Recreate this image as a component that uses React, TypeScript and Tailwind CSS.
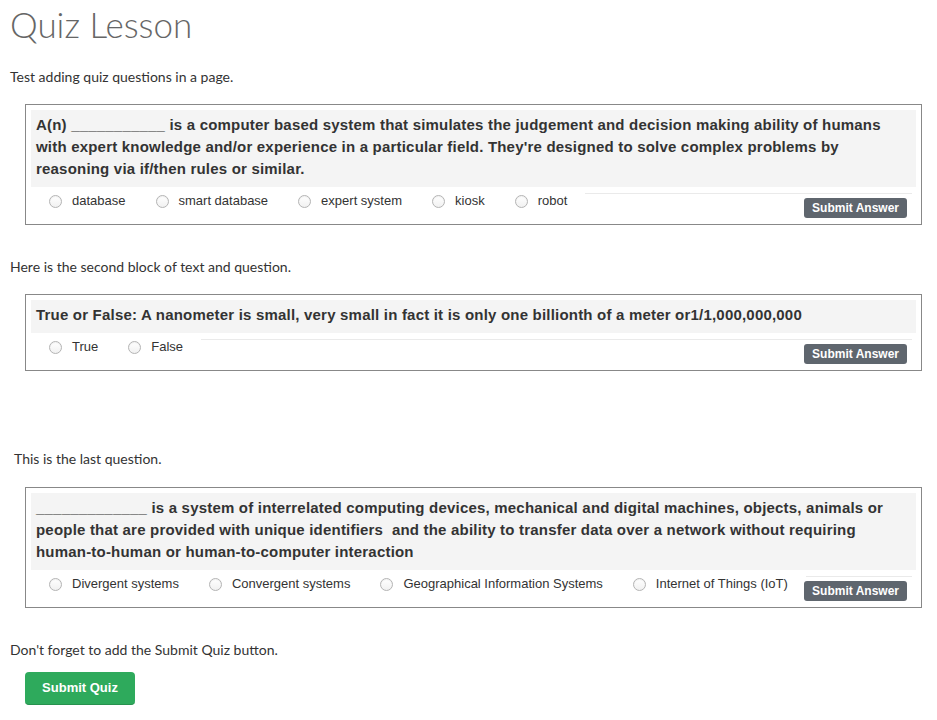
const bodyFont = "font-['Lato','Liberation_Sans',sans-serif]"
const quizFont = "font-['Liberation_Sans','Helvetica',Arial,sans-serif]"

interface QuizBoxProps {
  question: React.ReactNode
  options: string[]
  className?: string
}

function Radio() {
  return (
    <span className="inline-block w-[13px] h-[13px] shrink-0 rounded-full border border-[#b4b4b4] bg-gradient-to-b from-white to-[#f1f1f1] shadow-[inset_0_1px_1px_rgba(0,0,0,0.06)]" />
  )
}

function QuizBox({ question, options, className = "" }: QuizBoxProps) {
  return (
    <div className={`ml-[15px] w-[897px] border border-[#888] px-[5px] pt-[5px] pb-[6px] ${quizFont} ${className}`}>
      {/* question */}
      <div className="bg-[#f4f4f4] px-[5px] pt-[4px] pb-[7px] text-[15px] leading-[22px] tracking-[0.2px] font-bold text-[#333] whitespace-nowrap">
        {question}
      </div>

      {/* answers + submit */}
      <div className="flex pr-[4px]">
        <div className="flex shrink-0 items-center gap-[30px] pl-[18px] pr-[18px] mt-[5px] h-[18px] text-[13px] leading-[18px] text-[#333]">
          {options.map(opt => (
            <label key={opt} className="flex items-center gap-[10px] whitespace-nowrap">
              <Radio />
              <span>{opt}</span>
            </label>
          ))}
        </div>
        <div className="flex-1 min-w-0 mt-[6px] border-t border-[#eaeaea] flex justify-end">
          <button className="shrink-0 whitespace-nowrap mt-[4px] mr-[5px] h-[20px] px-[8px] rounded-[3px] bg-[#5f666e] text-white text-[12px] font-bold leading-[20px]">
            Submit Answer
          </button>
        </div>
      </div>
    </div>
  )
}

export default function App() {
  return (
    <div className={`min-h-screen bg-white px-[10px] text-[#333] ${bodyFont}`}>
      <h1 className="pt-[4px] text-[35px] leading-[40px] font-light text-[#666]">Quiz Lesson</h1>

      <p className="mt-[24px] text-[14px] leading-[18px]">Test adding quiz questions in a page.</p>

      <QuizBox
        className="mt-[18px]"
        question={
          <>
            A(n) ___________ is a computer based system that simulates the judgement and decision making ability of humans
            <br />
            with expert knowledge and/or experience in a particular field. They're designed to solve complex problems by
            <br />
            reasoning via if/then rules or similar.
          </>
        }
        options={["database", "smart database", "expert system", "kiosk", "robot"]}
      />

      <p className="mt-[33px] text-[14px] leading-[18px]">Here is the second block of text and question.</p>

      <QuizBox
        className="mt-[18px]"
        question="True or False: A nanometer is small, very small in fact it is only one billionth of a meter or1/1,000,000,000"
        options={["True", "False"]}
      />

      <p className="mt-[79px] pl-[4px] text-[14px] leading-[18px]">This is the last question.</p>

      <QuizBox
        className="mt-[19px]"
        question={
          <>
            _____________ is a system of interrelated computing devices, mechanical and digital machines, objects, animals or
            <br />
            people that are provided with unique identifiers{"\u00a0"} and the ability to transfer data over a network without requiring
            <br />
            human-to-human or human-to-computer interaction
          </>
        }
        options={["Divergent systems", "Convergent systems", "Geographical Information Systems", "Internet of Things (IoT)"]}
      />

      <p className="mt-[33px] text-[14px] leading-[18px]">Don't forget to add the Submit Quiz button.</p>

      <button
        className={`mt-[13px] ml-[15px] w-[110px] h-[33px] rounded-[4px] bg-[#2eaa5c] border-b border-[#27914e] text-white text-[13px] font-bold ${quizFont}`}
      >
        Submit Quiz
      </button>
    </div>
  )
}
